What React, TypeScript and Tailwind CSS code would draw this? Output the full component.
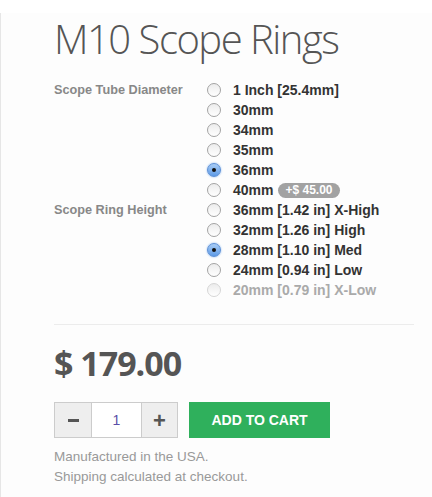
import React, { useState } from "react";

type TOption = {
  label: string;
  price?: string;
  disabled?: boolean;
};

const diameters: TOption[] = [
  { label: "1 Inch [25.4mm]" },
  { label: "30mm" },
  { label: "34mm" },
  { label: "35mm" },
  { label: "36mm" },
  { label: "40mm", price: "+$ 45.00" },
];

const heights: TOption[] = [
  { label: "36mm [1.42 in] X-High" },
  { label: "32mm [1.26 in] High" },
  { label: "28mm [1.10 in] Med" },
  { label: "24mm [0.94 in] Low" },
  { label: "20mm [0.79 in] X-Low", disabled: true },
];

const Radio = ({ checked, disabled }: { checked: boolean; disabled?: boolean }) => {
  if (checked) {
    return (
      <span className="flex h-[14px] w-[14px] items-center justify-center rounded-full border border-[#5b8fd6] bg-gradient-to-b from-[#a9cdf5] to-[#5d9ae6] shadow-[0_0_2px_#7fb0ee]">
        <span className="h-[4px] w-[4px] rounded-full bg-[#111]" />
      </span>
    );
  }
  return (
    <span
      className={`h-[14px] w-[14px] rounded-full border bg-gradient-to-b from-[#ececec] to-[#ffffff] ${
        disabled ? "border-[#d6d6d6]" : "border-[#a3a3a3]"
      }`}
    />
  );
};

const OptionGroup = ({
  title,
  options,
  selected,
  onSelect,
}: {
  title: string;
  options: TOption[];
  selected: number;
  onSelect: (i: number) => void;
}) => {
  return (
    <div className="flex">
      <div className="w-[153px] pt-[3px] text-[12.7px] font-bold leading-[14px] text-[#888]">{title}</div>
      <div className="flex flex-col">
        {options.map((opt, i) => (
          <label
            key={opt.label}
            className="flex h-[20px] cursor-pointer items-center"
            onClick={() => !opt.disabled && onSelect(i)}
          >
            <Radio checked={selected === i} disabled={opt.disabled} />
            <span
              className={`ml-[12px] text-[14px] font-bold ${
                opt.disabled ? "text-[#aaa]" : "text-[#333]"
              }`}
            >
              {opt.label}
            </span>
            {opt.price && (
              <span className="ml-[5px] rounded-full bg-[#a2a2a2] px-[7px] text-[12px] font-bold leading-[15px] text-white">
                {opt.price}
              </span>
            )}
          </label>
        ))}
      </div>
    </div>
  );
};

export default function App() {
  const [diameter, setDiameter] = useState(4);
  const [height, setHeight] = useState(2);
  const [qty, setQty] = useState(1);

  return (
    <div className="min-h-[497px] bg-white pt-[13px] font-['Liberation_Sans',Arial,sans-serif]">
      <div className="min-h-[484px] border-l border-[#e6e6e6] bg-[#fdfdfd] pl-[53px] pr-[18px]">
        <h1 className="pt-[1px] font-['Open_Sans',sans-serif] text-[40px] font-light leading-[50px] tracking-[-1.5px] text-[#555]">
          M10 Scope Rings
        </h1>

        <div className="mt-[16px]">
          <OptionGroup title="Scope Tube Diameter" options={diameters} selected={diameter} onSelect={setDiameter} />
          <OptionGroup title="Scope Ring Height" options={heights} selected={height} onSelect={setHeight} />
        </div>

        <hr className="mt-[24px] border-t border-[#ececec]" />

        <div className="mt-[18px] font-['Open_Sans',sans-serif] text-[34px] font-bold leading-[40px] tracking-[-1px] text-[#555]">
          $ 179.00
        </div>

        <div className="mt-[19px] flex items-center">
          <div className="flex h-[36px] border border-[#cccccc]">
            <button
              className="flex w-[36px] items-center justify-center bg-[#eeeeee]"
              onClick={() => setQty(Math.max(1, qty - 1))}
            >
              <span className="h-[3px] w-[11px] bg-[#555]" />
            </button>
            <input
              className="w-[51px] border-x border-[#cccccc] bg-white text-center text-[14px] text-[#5b4fa8] outline-none"
              value={qty}
              onChange={(e) => setQty(Number(e.target.value) || 1)}
            />
            <button
              className="flex w-[35px] items-center justify-center bg-[#eeeeee] text-[22px] font-bold text-[#555]"
              onClick={() => setQty(qty + 1)}
            >
              +
            </button>
          </div>
          <button className="ml-[11px] h-[36px] w-[141px] bg-[#2fb05c] text-[14px] font-bold uppercase text-white">
            Add to cart
          </button>
        </div>

        <div className="mt-[9px] text-[13.5px] leading-[20px] text-[#999]">
          <p>Manufactured in the USA.</p>
          <p>Shipping calculated at checkout.</p>
        </div>
      </div>
    </div>
  );
}
